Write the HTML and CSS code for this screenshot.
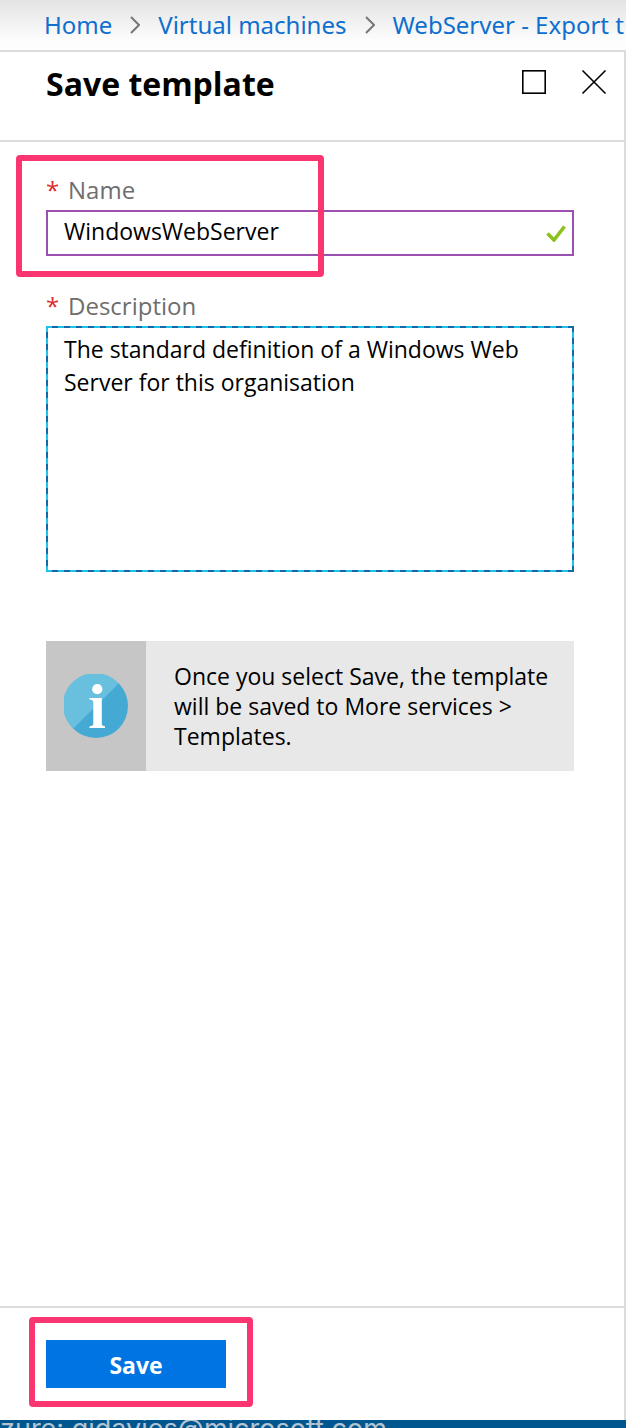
FILE: index.html
```html
<!DOCTYPE html>
<html lang="en">
<head>
<meta charset="utf-8">
<meta name="viewport" content="width=device-width, initial-scale=1">
<title>Save template</title>
<link rel="stylesheet" href="styles.css">
</head>
<body>
<nav class="crumbs" aria-label="Breadcrumb">
  <a href="#">Home</a>
  <svg class="chevron" viewBox="0 0 10 18" aria-hidden="true"><path d="M1 1l8 8-8 8"/></svg>
  <a href="#">Virtual machines</a>
  <svg class="chevron" viewBox="0 0 10 18" aria-hidden="true"><path d="M1 1l8 8-8 8"/></svg>
  <a href="#">WebServer - Export t</a>
</nav>
<main class="panel">
  <header class="panel-head">
    <h1>Save template</h1>
    <div class="tools">
      <button class="tool" type="button" aria-label="Maximize"><svg viewBox="0 0 26 26"><rect x="1.8" y="1.8" width="22.4" height="22.4"/></svg></button>
      <button class="tool" type="button" aria-label="Close"><svg viewBox="0 0 26 26"><path d="M1.5 1.5l23 23M24.500 1.500l-23 23"/></svg></button>
    </div>
  </header>
  <form class="form">
    <div class="fields">
      <div class="field">
        <label for="name"><span class="star">*</span>Name</label>
        <div class="input-box">
          <input id="name" type="text" value="WindowsWebServer">
          <svg class="tick" viewBox="0 0 20 18" aria-hidden="true"><path d="M1.500 9.500l6.500 6.500L18.500 2.500"/></svg>
        </div>
        <div class="marker marker-name"></div>
      </div>
      <div class="field">
        <label for="desc"><span class="star">*</span>Description</label>
        <textarea id="desc">The standard definition of a Windows Web Server for this organisation</textarea>
      </div>
      <div class="info">
        <div class="info-icon">
          <svg viewBox="0 0 64 64" aria-hidden="true">
            <circle cx="32" cy="32" r="32" fill="#45aad3"/>
            <path d="M9.400 54.600A32 32 0 1 1 54.600 9.400z" fill="#69c0de"/>
            <circle cx="33.300" cy="15.200" r="5.100" fill="#fff"/>
            <path d="M25.500 24h12.300v26q0 2 3.200 2.300v1.700H25.500v-1.700q3.800-.3 3.800-2.300V28q0-2.200-3.800-2.400z" fill="#fff"/>
          </svg>
        </div>
        <p>Once you select Save, the template will be saved to More services &gt; Templates.</p>
      </div>
    </div>
    <footer class="actions">
      <div class="save-wrap">
        <button class="save" type="submit">Save</button>
        <div class="marker marker-save"></div>
      </div>
    </footer>
  </form>
</main>
<div class="account">zure: gidavies@microsoft.com</div>
</body>
</html>
```
FILE: styles.css
```css
* { box-sizing: border-box; }
body {
  margin: 0;
  min-height: 100vh;
  display: flex;
  flex-direction: column;
  background: #fff;
  color: #000;
  font: 23px/30px "Open Sans", "Noto Sans", sans-serif;
}
.crumbs {
  flex: none;
  display: flex;
  align-items: center;
  gap: 18px;
  height: 52px;
  padding-left: 44px;
  overflow: hidden;
  white-space: nowrap;
  border-bottom: 2px solid #dcdcdc;
  background: linear-gradient(#e3e3e3, #fdfdfd 80%);
  font-family: "Noto Sans", "Open Sans", sans-serif;
  font-size: 24px;
}
.crumbs a { color: #0f6fce; text-decoration: none; }
.chevron {
  flex: none;
  width: 10px;
  height: 18px;
  fill: none;
  stroke: #777;
  stroke-width: 2;
}
.panel {
  flex: 1;
  display: flex;
  flex-direction: column;
  border-right: 2px solid #dcdcdc;
}
.panel-head {
  display: flex;
  justify-content: space-between;
  align-items: flex-start;
  height: 90px;
  padding: 12px 17px 0 46px;
  border-bottom: 2px solid #dcdcdc;
}
h1 { margin: 0; font-size: 32px; line-height: 40px; font-weight: 700; }
.tools { display: flex; gap: 34px; padding-top: 5px; }
.tool {
  width: 26px;
  height: 26px;
  padding: 0;
  border: 0;
  background: none;
}
.tool svg { display: block; fill: none; stroke: #000; stroke-width: 1.6; }
.form { flex: 1; display: flex; flex-direction: column; }
.fields { flex: 1; padding: 34px 50px 34px 46px; }
.field { position: relative; margin-bottom: 36px; }
label { display: block; height: 34px; line-height: 28px; font-size: 24px; color: #6e6e6e; }
.star { display: inline-block; width: 22px; color: #dd2c2c; }
.input-box {
  display: flex;
  align-items: center;
  height: 46px;
  padding: 0 6px 0 16px;
  border: 2px solid #9b4fae;
}
input {
  flex: 1;
  min-width: 0;
  height: 40px;
  padding: 0 0 4px;
  border: 0;
  outline: 0;
  background: none;
  color: inherit;
  font: inherit;
}
.tick { width: 20px; height: 18px; fill: none; stroke: #8bc11b; stroke-width: 3.600; }
textarea {
  display: block;
  width: 100%;
  height: 246px;
  padding: 5px 16px;
  border: 2px solid transparent;
  outline: 0;
  resize: none;
  background:
    linear-gradient(#fff, #fff) padding-box,
    repeating-conic-gradient(#1767a6 0 25%, #1ec3ea 0 50%) -2px -2px / 12px 12px border-box;
  background-origin: padding-box, padding-box;
  background-clip: padding-box, border-box;
  color: inherit;
  font: inherit;
  line-height: 33px;
}
.info { display: flex; margin-top: 69px; min-height: 130px; background: #e8e8e8; }
.info-icon { flex: none; display: flex; align-items: center; justify-content: center; width: 100px; background: #c6c6c6; }
.info-icon svg { width: 64px; height: 64px; }
.info p { margin: 0; padding: 20px 24px 20px 28px; }
.actions { padding: 32px 46px; border-top: 2px solid #dcdcdc; }
.save-wrap { position: relative; width: 180px; }
.save {
  display: block;
  width: 100%;
  height: 48px;
  padding: 2px 0 0;
  border: 0;
  background: #0074e2;
  color: #fff;
  font: inherit;
  font-weight: 700;
}
.marker { position: absolute; border: 6px solid #fb3570; border-radius: 4px; pointer-events: none; }
.marker-name { top: -21px; bottom: -21px; left: -30px; width: 308px; }
.marker-save { top: -23px; right: -27px; bottom: -19px; left: -17px; }
.account {
  flex: none;
  height: 8px;
  overflow: hidden;
  background: #00568f;
  color: #b4c3d0;
  font: 27px/18px Inter, Roboto, sans-serif;
  white-space: nowrap;
}
```
